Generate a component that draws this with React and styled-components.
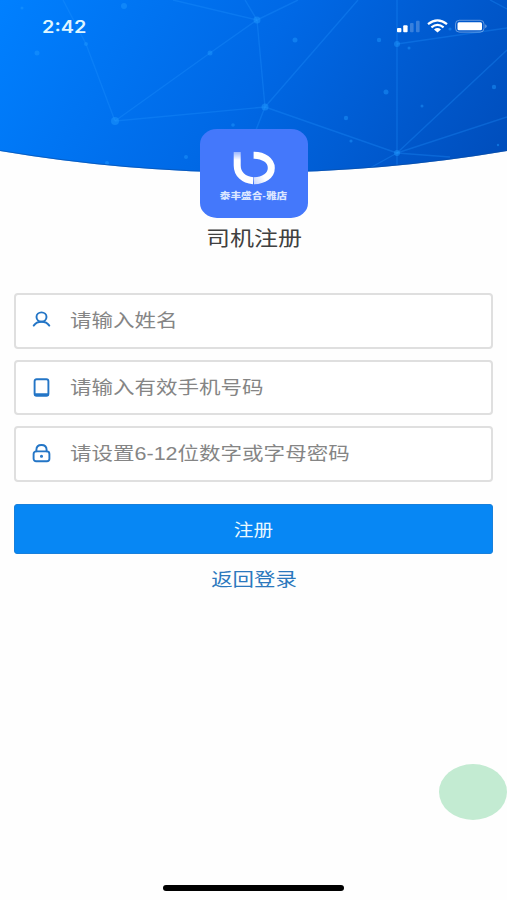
import React from 'react'
import styled, { createGlobalStyle } from 'styled-components'

const theme = {
  primary: '#0787f4',
  link: '#2b78bd',
  icon: '#2375c6',
  logo: '#4478fb',
  text: '#404040',
  placeholder: '#858585',
  border: '#dfdfdf'
}

const fields = [
  { name: 'name', type: 'text', icon: 'user', placeholder: '请输入姓名' },
  { name: 'phone', type: 'tel', icon: 'phone', placeholder: '请输入有效手机号码' },
  { name: 'password', type: 'password', icon: 'lock', placeholder: '请设置6-12位数字或字母密码' }
]

const dots = [
  [124, 6, 3], [37, 53, 2.5], [210, 53, 2.5], [115, 121, 4], [186, 157, 2],
  [107, 163, 2], [22, 8, 1.5], [257, 20, 3.5], [295, 40, 2.5], [379, 40, 2.2],
  [397, 44, 3], [386, 92, 2.5], [265, 107, 3.5], [346, 118, 2.2], [351, 141, 1.6],
  [397, 153, 3], [494, 87, 2.2], [422, 106, 1.5], [498, 145, 1.2], [233, 125, 1.8],
  [450, 29, 1.6], [86, 44, 2], [409, 48, 1.5]
]

const lines = [
  'M63 0L86 44L115 121', 'M115 121L210 53L257 20', 'M115 121L265 107',
  'M173 0L257 20', 'M245 0L257 20L298 0', 'M257 20L265 107L358 0',
  'M265 107L397 153', 'M265 107L254 135', 'M397 0V165', 'M397 44L507 28',
  'M397 153L507 50', 'M397 153L507 117', 'M397 153L450 157', 'M397 153L370 168',
  'M490 0L507 9'
]

const HeroArt = () => (
  <Art viewBox="0 0 507 173">
    <defs>
      <linearGradient id="sky" gradientUnits="userSpaceOnUse" x1="0" y1="0" x2="440" y2="270">
        <stop offset="0" stopColor="#0080ff" />
        <stop offset=".5" stopColor="#0068e5" />
        <stop offset="1" stopColor="#004dbb" />
      </linearGradient>
      <clipPath id="curve">
        <path d="M0 0H507V151Q254 194 0 151Z" />
      </clipPath>
    </defs>
    <g clipPath="url(#curve)">
      <path d="M0 0H507V173H0Z" fill="url(#sky)" />
      <g stroke="#2196ff" strokeOpacity=".3" strokeWidth="1.4" fill="none">
        {lines.map(d => <path key={d} d={d} />)}
      </g>
      <g fill="#229cff" fillOpacity=".45">
        {dots.map(([x, y, r]) => <circle key={`${x}-${y}`} cx={x} cy={y} r={r} />)}
      </g>
      <path d="M0 151Q254 194 507 151" stroke="#0b4fa4" strokeOpacity=".6" strokeWidth="2" fill="none" />
    </g>
  </Art>
)

const StatusIcons = () => (
  <svg width="92" height="16" viewBox="0 0 92 16" fill="#fff">
    <rect x="1" y="9" width="4.4" height="4.3" rx="1" />
    <rect x="7.2" y="6.3" width="4.4" height="7" rx="1" />
    <rect x="14" y="4" width="3.6" height="9.3" rx="1" opacity=".22" />
    <rect x="20" y="1.8" width="3.6" height="11.5" rx="1" opacity=".22" />
    <g fill="none" stroke="#fff" strokeWidth="2.2">
      <path d="M32 5.2Q41.5-2.4 51 5.2" />
      <path d="M35.4 8.4Q41.5 3.4 47.6 8.4" />
    </g>
    <path d="M38 10.4Q41.5 7.7 45 10.4L41.5 13.5Z" />
    <rect x="59.5" y="1.3" width="28.5" height="11.8" rx="3.8" fill="none" stroke="#fff" strokeOpacity=".38" />
    <rect x="61.5" y="3.2" width="24.5" height="8" rx="1.5" />
    <path d="M89.3 5.2Q92 7.2 89.3 9.2Z" opacity=".5" />
  </svg>
)

const LogoMark = () => (
  <svg width="46" height="36" viewBox="231 150 46 36" fill="none">
    <defs>
      <linearGradient id="stem" gradientUnits="userSpaceOnUse" x1="0" y1="151" x2="0" y2="160">
        <stop offset="0" stopColor="#fff" stopOpacity=".4" />
        <stop offset="1" stopColor="#fff" />
      </linearGradient>
      <linearGradient id="bowl" gradientUnits="userSpaceOnUse" x1="253" y1="184" x2="264" y2="177">
        <stop offset="0" stopColor="#fff" stopOpacity=".68" />
        <stop offset="1" stopColor="#fff" />
      </linearGradient>
    </defs>
    <path d="M237.2 152V165.5C237.2 174 243.6 180 253.2 180.7" stroke="url(#stem)" strokeWidth="7" />
    <path d="M253.6 155.2C263.8 155.2 271.3 160.4 271.3 168C271.3 175.6 263.8 180.7 254 180.7" stroke="url(#bowl)" strokeWidth="7" />
  </svg>
)

const icons = {
  user: (
    <>
      <ellipse cx="9.5" cy="6" rx="5" ry="4.6" />
      <path d="M1.7 14.6C3.3 12.2 6 10.7 9.5 10.7S15.7 12.2 17.3 14.6" />
    </>
  ),
  phone: (
    <>
      <rect x="2.6" y="1.2" width="13.8" height="16.6" rx="2" />
      <path d="M3.4 16.6H15.6" strokeWidth="2.6" />
    </>
  ),
  lock: (
    <>
      <rect x="1.6" y="7.4" width="15.8" height="9.8" rx="2.5" />
      <path d="M4.4 7.2V5.8C4.4 2.8 6.4 1 9.5 1S14.6 2.8 14.6 5.8V7.2" />
      <circle cx="9.5" cy="12.2" r=".6" fill="currentColor" />
    </>
  )
}

const App = () => {

  return (
    <>
      <GlobalStyle />
      <Screen>
        <Hero>
          <HeroArt />
          <StatusBar>
            <Time>2:42</Time>
            <StatusIcons />
          </StatusBar>
        </Hero>

        <Brand>
          <LogoMark />
          <BrandName>泰丰盛合-雅店</BrandName>
        </Brand>
        <Title>司机注册</Title>

        <Form onSubmit={e => e.preventDefault()}>
          {fields.map(field =>
            <Field key={field.name}>
              <FieldIcon viewBox="0 0 19 19">{icons[field.icon]}</FieldIcon>
              <Input
                name={field.name}
                type={field.type}
                placeholder={field.placeholder}
              />
            </Field>
          )}
          <Submit type="submit">
            <Wide>注册</Wide>
          </Submit>
          <BackLink href="#">
            <Wide>返回登录</Wide>
          </BackLink>
        </Form>

        <FloatingDot />
        <HomeIndicator />
      </Screen>
    </>
  )
}

const GlobalStyle = createGlobalStyle`
  * {
    box-sizing: border-box;
  }
  body {
    margin: 0;
    background: #fefefe;
    font-family: "Liberation Sans", "Noto Sans CJK SC", sans-serif;
  }
`

const Screen = styled.main`
  position: relative;
  display: flex;
  flex-direction: column;
  align-items: center;
  width: 507px;
  height: 900px;
  overflow: hidden;
`

const Hero = styled.header`
  display: grid;
  width: 100%;
  height: 173px;
  flex-shrink: 0;
  > * {
    grid-area: 1 / 1;
  }
`

const Art = styled.svg`
  display: block;
  width: 507px;
  height: 173px;
`

const StatusBar = styled.div`
  display: flex;
  justify-content: space-between;
  align-self: start;
  padding: 19px 19px 0 42px;
`

const Time = styled.span`
  font-family: Inter, "Liberation Sans", sans-serif;
  font-size: 17px;
  font-weight: 600;
  line-height: 16px;
  color: #dff6ff;
  transform: scaleX(1.17);
  transform-origin: left;
`

const Brand = styled.div`
  display: flex;
  flex-direction: column;
  align-items: center;
  width: 108px;
  height: 89px;
  margin-top: -44px;
  padding-top: 21px;
  border-radius: 17px / 15px;
  background: ${theme.logo};
  z-index: 1;
  flex-shrink: 0;
`

const BrandName = styled.span`
  margin-top: 4px;
  font-size: 9px;
  font-weight: 900;
  line-height: 12px;
  color: #dbe6ff;
  white-space: nowrap;
  transform: scaleX(1.18);
`

const Title = styled.h1`
  margin: 6px 0 0;
  font-size: 20px;
  font-weight: 400;
  line-height: 30px;
  color: ${theme.text};
  transform: scaleX(1.2);
`

const Form = styled.form`
  display: flex;
  flex-direction: column;
  align-items: center;
  gap: 11px;
  width: 100%;
  margin-top: 39px;
  padding: 0 14px;
`

const Field = styled.label`
  display: flex;
  align-items: center;
  width: 100%;
  height: 55.5px;
  padding-left: 16px;
  border: 2px solid ${theme.border};
  border-radius: 4px;
  background: #fff;
`

const FieldIcon = styled.svg`
  width: 19px;
  height: 19px;
  margin-right: 19px;
  flex-shrink: 0;
  fill: none;
  color: ${theme.icon};
  stroke: currentColor;
  stroke-width: 1.9;
  stroke-linecap: round;
`

const Input = styled.input`
  width: 340px;
  padding: 1px 0 0;
  border: 0;
  outline: 0;
  background: none;
  font: inherit;
  font-size: 18px;
  line-height: 28px;
  transform: scaleX(1.195);
  transform-origin: left;
  &::placeholder {
    color: ${theme.placeholder};
    opacity: 1;
  }
`

const Wide = styled.span`
  display: inline-block;
  transform: scaleX(1.19);
`

const Submit = styled.button`
  width: 100%;
  height: 50px;
  margin-top: 11px;
  padding: 0;
  border: 1px solid #1780dc;
  border-radius: 3px;
  background: ${theme.primary};
  font: inherit;
  font-size: 16.5px;
  color: #e9f8ff;
`

const BackLink = styled.a`
  font-size: 18px;
  line-height: 30px;
  color: ${theme.link};
  text-decoration: none;
`

const FloatingDot = styled.div`
  position: absolute;
  right: 0;
  top: 764px;
  width: 68px;
  height: 56px;
  border-radius: 50%;
  background: #c3ebd2;
`

const HomeIndicator = styled.div`
  width: 181px;
  height: 6px;
  margin: auto 0 9px;
  border-radius: 3px;
  background: #000;
`

export default App
